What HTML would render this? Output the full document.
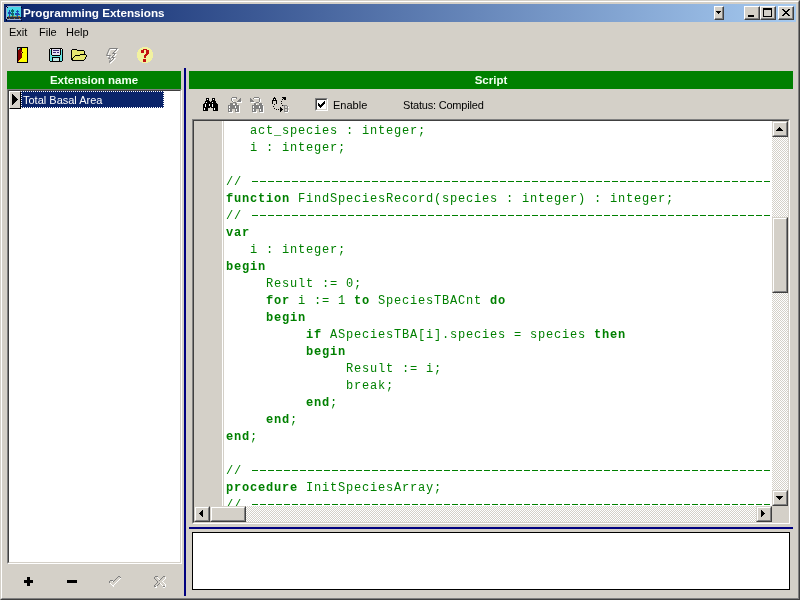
<!DOCTYPE html>
<html><head><meta charset="utf-8">
<style>
*{box-sizing:border-box;margin:0;padding:0}
html,body{width:800px;height:600px;overflow:hidden;-webkit-font-smoothing:none;background:#D4D0C8;font-family:"Liberation Sans",sans-serif;font-size:11px;color:#000}
.a{position:absolute}
#root{position:absolute;left:0;top:0;width:800px;height:600px;will-change:transform}
svg.a{display:block}
#win{position:absolute;left:0;top:0;width:800px;height:600px;border-top:1px solid #D4D0C8;border-left:1px solid #D4D0C8;border-right:1px solid #404040;border-bottom:1px solid #404040}
#win2{position:absolute;left:1px;top:1px;width:798px;height:598px;border-top:1px solid #fff;border-left:1px solid #fff;border-right:1px solid #808080;border-bottom:1px solid #808080}
#title{left:4px;top:4px;width:792px;height:18px;background:linear-gradient(to right,#0A246A,#A6CAF0)}
#ttext{left:23px;top:6px;color:#fff;font-weight:bold;font-size:11.7px;line-height:14px;white-space:nowrap}
.tb{position:absolute;top:6px;height:14px;background:#D4D0C8;border-top:1px solid #fff;border-left:1px solid #fff;border-right:1px solid #404040;border-bottom:1px solid #404040;box-shadow:inset -1px -1px 0 #808080}
.menu{top:26px;line-height:13px;white-space:nowrap}
.ghead{background:#008000;color:#F0FFF0;font-weight:bold;font-size:11.5px;text-align:center;line-height:18px;height:18px}
.sunk{border-top:1px solid #808080;border-left:1px solid #808080;border-right:1px solid #fff;border-bottom:1px solid #fff}
.sunk2{width:100%;height:100%;border-top:1px solid #404040;border-left:1px solid #404040;border-right:1px solid #D4D0C8;border-bottom:1px solid #D4D0C8}
.btn{position:absolute;background:#D4D0C8;border-top:1px solid #D4D0C8;border-left:1px solid #D4D0C8;border-right:1px solid #404040;border-bottom:1px solid #404040}
.btn>div{width:100%;height:100%;border-top:1px solid #fff;border-left:1px solid #fff;border-right:1px solid #808080;border-bottom:1px solid #808080}
.code{will-change:transform;font-family:"Liberation Mono",monospace;font-size:12px;letter-spacing:0.8px;line-height:17px;color:#008000;white-space:pre}
.code b{font-weight:bold}
.dsh{display:inline-block;vertical-align:top;height:17px;background-image:linear-gradient(to right,transparent 2px,#008000 2px);background-size:8px 1px;background-repeat:repeat-x;background-position:0 7px}
.track{background-color:#fff;background-image:linear-gradient(45deg,#D4D0C8 25%,transparent 25%,transparent 75%,#D4D0C8 75%),linear-gradient(45deg,#D4D0C8 25%,transparent 25%,transparent 75%,#D4D0C8 75%);background-size:2px 2px;background-position:0 0,1px 1px}
</style></head><body><div id="root">
<div id="win"></div><div id="win2"></div>
<div class="a" id="title"></div>
<div class="a" id="ttext">Programming Extensions</div>
<svg class="a" style="left:6px;top:6px" width="16" height="15" viewBox="0 0 16 15" shape-rendering="crispEdges"><rect x="0" y="0" width="1" height="1" fill="#000020"/><rect x="1" y="0" width="14" height="1" fill="#9AB0D8"/><rect x="0" y="1" width="1" height="1" fill="#9AB0D8"/><rect x="1" y="1" width="1" height="1" fill="#000020"/><rect x="2" y="1" width="13" height="1" fill="#48D8E8"/><rect x="15" y="1" width="1" height="1" fill="#000020"/><rect x="0" y="2" width="1" height="1" fill="#9AB0D8"/><rect x="1" y="2" width="14" height="1" fill="#48D8E8"/><rect x="0" y="3" width="1" height="1" fill="#9AB0D8"/><rect x="1" y="3" width="5" height="1" fill="#48D8E8"/><rect x="6" y="3" width="1" height="1" fill="#0F6868"/><rect x="7" y="3" width="8" height="1" fill="#48D8E8"/><rect x="0" y="4" width="1" height="1" fill="#9AB0D8"/><rect x="1" y="4" width="2" height="1" fill="#48D8E8"/><rect x="3" y="4" width="1" height="1" fill="#1C48B0"/><rect x="4" y="4" width="1" height="1" fill="#48D8E8"/><rect x="5" y="4" width="3" height="1" fill="#0F6868"/><rect x="8" y="4" width="3" height="1" fill="#48D8E8"/><rect x="11" y="4" width="1" height="1" fill="#1C48B0"/><rect x="12" y="4" width="3" height="1" fill="#48D8E8"/><rect x="0" y="5" width="1" height="1" fill="#9AB0D8"/><rect x="1" y="5" width="2" height="1" fill="#48D8E8"/><rect x="3" y="5" width="1" height="1" fill="#1C48B0"/><rect x="4" y="5" width="1" height="1" fill="#48D8E8"/><rect x="5" y="5" width="3" height="1" fill="#0F6868"/><rect x="8" y="5" width="2" height="1" fill="#48D8E8"/><rect x="10" y="5" width="3" height="1" fill="#1C48B0"/><rect x="13" y="5" width="2" height="1" fill="#48D8E8"/><rect x="0" y="6" width="1" height="1" fill="#9AB0D8"/><rect x="1" y="6" width="1" height="1" fill="#48D8E8"/><rect x="2" y="6" width="3" height="1" fill="#1C48B0"/><rect x="5" y="6" width="1" height="1" fill="#48D8E8"/><rect x="6" y="6" width="1" height="1" fill="#0F6868"/><rect x="7" y="6" width="4" height="1" fill="#48D8E8"/><rect x="11" y="6" width="1" height="1" fill="#1C48B0"/><rect x="12" y="6" width="3" height="1" fill="#48D8E8"/><rect x="0" y="7" width="1" height="1" fill="#9AB0D8"/><rect x="1" y="7" width="1" height="1" fill="#48D8E8"/><rect x="2" y="7" width="3" height="1" fill="#1C48B0"/><rect x="5" y="7" width="3" height="1" fill="#0F6868"/><rect x="8" y="7" width="1" height="1" fill="#48D8E8"/><rect x="9" y="7" width="4" height="1" fill="#1C48B0"/><rect x="13" y="7" width="2" height="1" fill="#48D8E8"/><rect x="0" y="8" width="1" height="1" fill="#9AB0D8"/><rect x="1" y="8" width="2" height="1" fill="#48D8E8"/><rect x="3" y="8" width="1" height="1" fill="#1C48B0"/><rect x="4" y="8" width="1" height="1" fill="#48D8E8"/><rect x="5" y="8" width="3" height="1" fill="#0F6868"/><rect x="8" y="8" width="1" height="1" fill="#48D8E8"/><rect x="9" y="8" width="5" height="1" fill="#1C48B0"/><rect x="14" y="8" width="1" height="1" fill="#48D8E8"/><rect x="0" y="9" width="1" height="1" fill="#9AB0D8"/><rect x="1" y="9" width="2" height="1" fill="#48D8E8"/><rect x="3" y="9" width="1" height="1" fill="#1C48B0"/><rect x="4" y="9" width="2" height="1" fill="#48D8E8"/><rect x="6" y="9" width="1" height="1" fill="#0F6868"/><rect x="7" y="9" width="1" height="1" fill="#50A080"/><rect x="8" y="9" width="2" height="1" fill="#48D8E8"/><rect x="10" y="9" width="1" height="1" fill="#50A080"/><rect x="11" y="9" width="1" height="1" fill="#1C48B0"/><rect x="12" y="9" width="3" height="1" fill="#48D8E8"/><rect x="0" y="10" width="1" height="1" fill="#9AB0D8"/><rect x="1" y="10" width="1" height="1" fill="#48D8E8"/><rect x="2" y="10" width="1" height="1" fill="#B07030"/><rect x="3" y="10" width="1" height="1" fill="#1C48B0"/><rect x="4" y="10" width="1" height="1" fill="#50A080"/><rect x="5" y="10" width="1" height="1" fill="#B07030"/><rect x="6" y="10" width="1" height="1" fill="#0F6868"/><rect x="7" y="10" width="1" height="1" fill="#B07030"/><rect x="8" y="10" width="1" height="1" fill="#50A080"/><rect x="9" y="10" width="1" height="1" fill="#B07030"/><rect x="10" y="10" width="1" height="1" fill="#50A080"/><rect x="11" y="10" width="1" height="1" fill="#1C48B0"/><rect x="12" y="10" width="2" height="1" fill="#B07030"/><rect x="14" y="10" width="1" height="1" fill="#48D8E8"/><rect x="0" y="11" width="1" height="1" fill="#9AB0D8"/><rect x="1" y="11" width="1" height="1" fill="#000020"/><rect x="2" y="11" width="13" height="1" fill="#283040"/><rect x="15" y="11" width="1" height="1" fill="#000020"/><rect x="0" y="12" width="1" height="1" fill="#9AB0D8"/><rect x="1" y="12" width="2" height="1" fill="#283040"/><rect x="3" y="12" width="1" height="1" fill="#B07030"/><rect x="4" y="12" width="4" height="1" fill="#283040"/><rect x="8" y="12" width="1" height="1" fill="#B07030"/><rect x="9" y="12" width="4" height="1" fill="#283040"/><rect x="13" y="12" width="1" height="1" fill="#B07030"/><rect x="14" y="12" width="1" height="1" fill="#283040"/><rect x="0" y="13" width="1" height="1" fill="#000020"/><rect x="1" y="13" width="14" height="1" fill="#9AB0D8"/><rect x="0" y="14" width="1" height="1" fill="#000020"/><rect x="15" y="14" width="1" height="1" fill="#000020"/></svg>
<div class="tb" style="left:714px;width:10px"></div>
<div class="tb" style="left:744px;width:16px"></div>
<div class="tb" style="left:760px;width:16px"></div>
<div class="tb" style="left:778px;width:16px"></div>
<svg class="a" style="left:716px;top:11px" width="5" height="3" viewBox="0 0 5 3" shape-rendering="crispEdges"><rect x="0" y="0" width="5" height="1" fill="#000000"/><rect x="1" y="1" width="3" height="1" fill="#000000"/><rect x="2" y="2" width="1" height="1" fill="#000000"/></svg><svg class="a" style="left:748px;top:15px" width="6" height="2" viewBox="0 0 6 2" shape-rendering="crispEdges"><rect x="0" y="0" width="6" height="1" fill="#000000"/><rect x="0" y="1" width="6" height="1" fill="#000000"/></svg><svg class="a" style="left:763px;top:8px" width="9" height="9" viewBox="0 0 9 9" shape-rendering="crispEdges"><rect x="0" y="0" width="9" height="1" fill="#000000"/><rect x="0" y="1" width="9" height="1" fill="#000000"/><rect x="0" y="2" width="1" height="1" fill="#000000"/><rect x="8" y="2" width="1" height="1" fill="#000000"/><rect x="0" y="3" width="1" height="1" fill="#000000"/><rect x="8" y="3" width="1" height="1" fill="#000000"/><rect x="0" y="4" width="1" height="1" fill="#000000"/><rect x="8" y="4" width="1" height="1" fill="#000000"/><rect x="0" y="5" width="1" height="1" fill="#000000"/><rect x="8" y="5" width="1" height="1" fill="#000000"/><rect x="0" y="6" width="1" height="1" fill="#000000"/><rect x="8" y="6" width="1" height="1" fill="#000000"/><rect x="0" y="7" width="1" height="1" fill="#000000"/><rect x="8" y="7" width="1" height="1" fill="#000000"/><rect x="0" y="8" width="9" height="1" fill="#000000"/></svg><svg class="a" style="left:782px;top:9px" width="8" height="7" viewBox="0 0 8 7" shape-rendering="crispEdges"><rect x="0" y="0" width="2" height="1" fill="#000000"/><rect x="6" y="0" width="2" height="1" fill="#000000"/><rect x="1" y="1" width="2" height="1" fill="#000000"/><rect x="5" y="1" width="2" height="1" fill="#000000"/><rect x="2" y="2" width="4" height="1" fill="#000000"/><rect x="3" y="3" width="2" height="1" fill="#000000"/><rect x="2" y="4" width="4" height="1" fill="#000000"/><rect x="1" y="5" width="2" height="1" fill="#000000"/><rect x="5" y="5" width="2" height="1" fill="#000000"/><rect x="0" y="6" width="2" height="1" fill="#000000"/><rect x="6" y="6" width="2" height="1" fill="#000000"/></svg>

<div class="a menu" style="left:9px">Exit</div>
<div class="a menu" style="left:39px">File</div>
<div class="a menu" style="left:66px">Help</div>
<svg class="a" style="left:17px;top:47px" width="11" height="16" viewBox="0 0 11 16" shape-rendering="crispEdges"><rect x="0" y="0" width="11" height="1" fill="#000000"/><rect x="0" y="1" width="1" height="1" fill="#000000"/><rect x="1" y="1" width="2" height="1" fill="#80C0C0"/><rect x="3" y="1" width="1" height="1" fill="#800000"/><rect x="4" y="1" width="1" height="1" fill="#000000"/><rect x="5" y="1" width="5" height="1" fill="#FFFF00"/><rect x="10" y="1" width="1" height="1" fill="#000000"/><rect x="0" y="2" width="1" height="1" fill="#000000"/><rect x="1" y="2" width="1" height="1" fill="#80C0C0"/><rect x="2" y="2" width="2" height="1" fill="#800000"/><rect x="4" y="2" width="1" height="1" fill="#000000"/><rect x="5" y="2" width="5" height="1" fill="#FFFF00"/><rect x="10" y="2" width="1" height="1" fill="#000000"/><rect x="0" y="3" width="1" height="1" fill="#000000"/><rect x="1" y="3" width="4" height="1" fill="#800000"/><rect x="5" y="3" width="5" height="1" fill="#FFFF00"/><rect x="10" y="3" width="1" height="1" fill="#000000"/><rect x="0" y="4" width="1" height="1" fill="#000000"/><rect x="1" y="4" width="4" height="1" fill="#800000"/><rect x="5" y="4" width="5" height="1" fill="#FFFF00"/><rect x="10" y="4" width="1" height="1" fill="#000000"/><rect x="0" y="5" width="1" height="1" fill="#000000"/><rect x="1" y="5" width="3" height="1" fill="#800000"/><rect x="4" y="5" width="1" height="1" fill="#FF9040"/><rect x="5" y="5" width="1" height="1" fill="#000000"/><rect x="6" y="5" width="4" height="1" fill="#FFFF00"/><rect x="10" y="5" width="1" height="1" fill="#000000"/><rect x="0" y="6" width="1" height="1" fill="#000000"/><rect x="1" y="6" width="4" height="1" fill="#800000"/><rect x="5" y="6" width="5" height="1" fill="#FFFF00"/><rect x="10" y="6" width="1" height="1" fill="#000000"/><rect x="0" y="7" width="1" height="1" fill="#000000"/><rect x="1" y="7" width="4" height="1" fill="#800000"/><rect x="5" y="7" width="5" height="1" fill="#FFFF00"/><rect x="10" y="7" width="1" height="1" fill="#000000"/><rect x="0" y="8" width="1" height="1" fill="#000000"/><rect x="1" y="8" width="4" height="1" fill="#800000"/><rect x="5" y="8" width="5" height="1" fill="#FFFF00"/><rect x="10" y="8" width="1" height="1" fill="#000000"/><rect x="0" y="9" width="1" height="1" fill="#000000"/><rect x="1" y="9" width="4" height="1" fill="#800000"/><rect x="5" y="9" width="5" height="1" fill="#FFFF00"/><rect x="10" y="9" width="1" height="1" fill="#000000"/><rect x="0" y="10" width="1" height="1" fill="#000000"/><rect x="1" y="10" width="4" height="1" fill="#800000"/><rect x="5" y="10" width="5" height="1" fill="#FFFF00"/><rect x="10" y="10" width="1" height="1" fill="#000000"/><rect x="0" y="11" width="1" height="1" fill="#000000"/><rect x="1" y="11" width="3" height="1" fill="#800000"/><rect x="4" y="11" width="6" height="1" fill="#FFFF00"/><rect x="10" y="11" width="1" height="1" fill="#000000"/><rect x="0" y="12" width="1" height="1" fill="#000000"/><rect x="1" y="12" width="2" height="1" fill="#800000"/><rect x="3" y="12" width="7" height="1" fill="#FFFF00"/><rect x="10" y="12" width="1" height="1" fill="#000000"/><rect x="0" y="13" width="1" height="1" fill="#000000"/><rect x="1" y="13" width="1" height="1" fill="#800000"/><rect x="2" y="13" width="8" height="1" fill="#FFFF00"/><rect x="10" y="13" width="1" height="1" fill="#000000"/><rect x="0" y="14" width="1" height="1" fill="#000000"/><rect x="1" y="14" width="1" height="1" fill="#FF9040"/><rect x="2" y="14" width="8" height="1" fill="#FFFF00"/><rect x="10" y="14" width="1" height="1" fill="#000000"/><rect x="0" y="15" width="11" height="1" fill="#000000"/></svg><svg class="a" style="left:49px;top:48px" width="14" height="14" viewBox="0 0 14 14" shape-rendering="crispEdges"><rect x="1" y="0" width="12" height="1" fill="#000000"/><rect x="0" y="1" width="1" height="1" fill="#000000"/><rect x="1" y="1" width="1" height="1" fill="#FFFFFF"/><rect x="2" y="1" width="1" height="1" fill="#000000"/><rect x="3" y="1" width="8" height="1" fill="#E4E0F4"/><rect x="11" y="1" width="1" height="1" fill="#000000"/><rect x="12" y="1" width="1" height="1" fill="#FFFFFF"/><rect x="13" y="1" width="1" height="1" fill="#000000"/><rect x="0" y="2" width="1" height="1" fill="#000000"/><rect x="1" y="2" width="1" height="1" fill="#68E4E4"/><rect x="2" y="2" width="1" height="1" fill="#000000"/><rect x="3" y="2" width="1" height="1" fill="#E4E0F4"/><rect x="4" y="2" width="6" height="1" fill="#382878"/><rect x="10" y="2" width="1" height="1" fill="#E4E0F4"/><rect x="11" y="2" width="1" height="1" fill="#000000"/><rect x="12" y="2" width="1" height="1" fill="#68E4E4"/><rect x="13" y="2" width="1" height="1" fill="#000000"/><rect x="0" y="3" width="1" height="1" fill="#000000"/><rect x="1" y="3" width="1" height="1" fill="#68E4E4"/><rect x="2" y="3" width="1" height="1" fill="#000000"/><rect x="3" y="3" width="8" height="1" fill="#E4E0F4"/><rect x="11" y="3" width="1" height="1" fill="#000000"/><rect x="12" y="3" width="1" height="1" fill="#68E4E4"/><rect x="13" y="3" width="1" height="1" fill="#000000"/><rect x="0" y="4" width="1" height="1" fill="#000000"/><rect x="1" y="4" width="1" height="1" fill="#68E4E4"/><rect x="2" y="4" width="1" height="1" fill="#000000"/><rect x="3" y="4" width="1" height="1" fill="#E4E0F4"/><rect x="4" y="4" width="3" height="1" fill="#382878"/><rect x="7" y="4" width="1" height="1" fill="#E4E0F4"/><rect x="8" y="4" width="2" height="1" fill="#382878"/><rect x="10" y="4" width="1" height="1" fill="#E4E0F4"/><rect x="11" y="4" width="1" height="1" fill="#000000"/><rect x="12" y="4" width="1" height="1" fill="#68E4E4"/><rect x="13" y="4" width="1" height="1" fill="#000000"/><rect x="0" y="5" width="1" height="1" fill="#000000"/><rect x="1" y="5" width="1" height="1" fill="#68E4E4"/><rect x="2" y="5" width="1" height="1" fill="#000000"/><rect x="3" y="5" width="8" height="1" fill="#E4E0F4"/><rect x="11" y="5" width="1" height="1" fill="#000000"/><rect x="12" y="5" width="1" height="1" fill="#68E4E4"/><rect x="13" y="5" width="1" height="1" fill="#000000"/><rect x="0" y="6" width="1" height="1" fill="#000000"/><rect x="1" y="6" width="1" height="1" fill="#68E4E4"/><rect x="2" y="6" width="1" height="1" fill="#000000"/><rect x="3" y="6" width="8" height="1" fill="#E4E0F4"/><rect x="11" y="6" width="1" height="1" fill="#000000"/><rect x="12" y="6" width="1" height="1" fill="#68E4E4"/><rect x="13" y="6" width="1" height="1" fill="#000000"/><rect x="0" y="7" width="1" height="1" fill="#000000"/><rect x="1" y="7" width="2" height="1" fill="#68E4E4"/><rect x="3" y="7" width="8" height="1" fill="#000000"/><rect x="11" y="7" width="2" height="1" fill="#68E4E4"/><rect x="13" y="7" width="1" height="1" fill="#000000"/><rect x="0" y="8" width="1" height="1" fill="#000000"/><rect x="1" y="8" width="12" height="1" fill="#68E4E4"/><rect x="13" y="8" width="1" height="1" fill="#000000"/><rect x="0" y="9" width="1" height="1" fill="#000000"/><rect x="1" y="9" width="2" height="1" fill="#68E4E4"/><rect x="3" y="9" width="8" height="1" fill="#000000"/><rect x="11" y="9" width="2" height="1" fill="#68E4E4"/><rect x="13" y="9" width="1" height="1" fill="#000000"/><rect x="0" y="10" width="1" height="1" fill="#000000"/><rect x="1" y="10" width="2" height="1" fill="#68E4E4"/><rect x="3" y="10" width="1" height="1" fill="#000000"/><rect x="4" y="10" width="6" height="1" fill="#C4E4E4"/><rect x="10" y="10" width="1" height="1" fill="#000000"/><rect x="11" y="10" width="2" height="1" fill="#68E4E4"/><rect x="13" y="10" width="1" height="1" fill="#000000"/><rect x="0" y="11" width="1" height="1" fill="#000000"/><rect x="1" y="11" width="2" height="1" fill="#68E4E4"/><rect x="3" y="11" width="1" height="1" fill="#000000"/><rect x="4" y="11" width="6" height="1" fill="#C4E4E4"/><rect x="10" y="11" width="1" height="1" fill="#000000"/><rect x="11" y="11" width="2" height="1" fill="#68E4E4"/><rect x="13" y="11" width="1" height="1" fill="#000000"/><rect x="0" y="12" width="1" height="1" fill="#000000"/><rect x="1" y="12" width="2" height="1" fill="#68E4E4"/><rect x="3" y="12" width="1" height="1" fill="#000000"/><rect x="4" y="12" width="6" height="1" fill="#C4E4E4"/><rect x="10" y="12" width="1" height="1" fill="#000000"/><rect x="11" y="12" width="2" height="1" fill="#68E4E4"/><rect x="13" y="12" width="1" height="1" fill="#000000"/><rect x="1" y="13" width="12" height="1" fill="#000000"/></svg><svg class="a" style="left:71px;top:49px" width="16" height="12" viewBox="0 0 16 12" shape-rendering="crispEdges"><rect x="1" y="0" width="5" height="1" fill="#000000"/><rect x="0" y="1" width="1" height="1" fill="#000000"/><rect x="1" y="1" width="5" height="1" fill="#E6E670"/><rect x="6" y="1" width="7" height="1" fill="#000000"/><rect x="0" y="2" width="1" height="1" fill="#000000"/><rect x="1" y="2" width="12" height="1" fill="#E6E670"/><rect x="13" y="2" width="1" height="1" fill="#000000"/><rect x="0" y="3" width="1" height="1" fill="#000000"/><rect x="1" y="3" width="12" height="1" fill="#E6E670"/><rect x="13" y="3" width="1" height="1" fill="#000000"/><rect x="0" y="4" width="1" height="1" fill="#000000"/><rect x="1" y="4" width="12" height="1" fill="#E6E670"/><rect x="13" y="4" width="1" height="1" fill="#000000"/><rect x="0" y="5" width="1" height="1" fill="#000000"/><rect x="1" y="5" width="8" height="1" fill="#E6E670"/><rect x="9" y="5" width="6" height="1" fill="#000000"/><rect x="0" y="6" width="1" height="1" fill="#000000"/><rect x="1" y="6" width="3" height="1" fill="#E6E670"/><rect x="4" y="6" width="5" height="1" fill="#000000"/><rect x="9" y="6" width="6" height="1" fill="#E6E670"/><rect x="15" y="6" width="1" height="1" fill="#000000"/><rect x="0" y="7" width="1" height="1" fill="#000000"/><rect x="1" y="7" width="2" height="1" fill="#E6E670"/><rect x="3" y="7" width="1" height="1" fill="#000000"/><rect x="4" y="7" width="11" height="1" fill="#E6E670"/><rect x="15" y="7" width="1" height="1" fill="#000000"/><rect x="0" y="8" width="1" height="1" fill="#000000"/><rect x="1" y="8" width="1" height="1" fill="#E6E670"/><rect x="2" y="8" width="1" height="1" fill="#000000"/><rect x="3" y="8" width="11" height="1" fill="#E6E670"/><rect x="14" y="8" width="1" height="1" fill="#000000"/><rect x="0" y="9" width="2" height="1" fill="#000000"/><rect x="2" y="9" width="12" height="1" fill="#E6E670"/><rect x="14" y="9" width="1" height="1" fill="#000000"/><rect x="0" y="10" width="2" height="1" fill="#000000"/><rect x="2" y="10" width="11" height="1" fill="#E6E670"/><rect x="13" y="10" width="1" height="1" fill="#000000"/><rect x="1" y="11" width="12" height="1" fill="#000000"/></svg><svg class="a" style="left:104px;top:46px" width="20" height="20" viewBox="104 46 20 20"><path d="M110.5,49.5 L118.5,49.5 L113.5,54.5 L116.5,54.5 L112.5,58.5 L115.5,58.5 L110.5,63.5 L111.5,59.5 L109.5,59.5 L111.5,56.5 L107.5,56.5 Z" fill="none" stroke="#fff" stroke-width="1"/><path d="M109.5,48.5 L117.5,48.5 L112.5,53.5 L115.5,53.5 L111.5,57.5 L114.5,57.5 L109.5,62.5 L110.5,58.5 L108.5,58.5 L110.5,55.5 L106.5,55.5 Z" fill="none" stroke="#808080" stroke-width="1"/></svg><svg class="a" style="left:137px;top:47px" width="16" height="16" viewBox="0 0 16 16" shape-rendering="crispEdges"><rect x="5" y="0" width="6" height="1" fill="#F2F2A0"/><rect x="3" y="1" width="10" height="1" fill="#F2F2A0"/><rect x="2" y="2" width="4" height="1" fill="#F2F2A0"/><rect x="6" y="2" width="4" height="1" fill="#C41010"/><rect x="10" y="2" width="4" height="1" fill="#F2F2A0"/><rect x="1" y="3" width="3" height="1" fill="#F2F2A0"/><rect x="4" y="3" width="3" height="1" fill="#C41010"/><rect x="7" y="3" width="2" height="1" fill="#F2F2A0"/><rect x="9" y="3" width="3" height="1" fill="#C41010"/><rect x="12" y="3" width="3" height="1" fill="#F2F2A0"/><rect x="1" y="4" width="3" height="1" fill="#F2F2A0"/><rect x="4" y="4" width="3" height="1" fill="#C41010"/><rect x="7" y="4" width="2" height="1" fill="#F2F2A0"/><rect x="9" y="4" width="3" height="1" fill="#C41010"/><rect x="12" y="4" width="3" height="1" fill="#F2F2A0"/><rect x="0" y="5" width="4" height="1" fill="#F2F2A0"/><rect x="4" y="5" width="3" height="1" fill="#C41010"/><rect x="7" y="5" width="2" height="1" fill="#F2F2A0"/><rect x="9" y="5" width="3" height="1" fill="#C41010"/><rect x="12" y="5" width="4" height="1" fill="#F2F2A0"/><rect x="0" y="6" width="9" height="1" fill="#F2F2A0"/><rect x="9" y="6" width="3" height="1" fill="#C41010"/><rect x="12" y="6" width="4" height="1" fill="#F2F2A0"/><rect x="0" y="7" width="8" height="1" fill="#F2F2A0"/><rect x="8" y="7" width="3" height="1" fill="#C41010"/><rect x="11" y="7" width="5" height="1" fill="#F2F2A0"/><rect x="0" y="8" width="7" height="1" fill="#F2F2A0"/><rect x="7" y="8" width="3" height="1" fill="#C41010"/><rect x="10" y="8" width="6" height="1" fill="#F2F2A0"/><rect x="0" y="9" width="7" height="1" fill="#F2F2A0"/><rect x="7" y="9" width="2" height="1" fill="#C41010"/><rect x="9" y="9" width="7" height="1" fill="#F2F2A0"/><rect x="0" y="10" width="7" height="1" fill="#F2F2A0"/><rect x="7" y="10" width="2" height="1" fill="#C41010"/><rect x="9" y="10" width="7" height="1" fill="#F2F2A0"/><rect x="1" y="11" width="14" height="1" fill="#F2F2A0"/><rect x="1" y="12" width="5" height="1" fill="#F2F2A0"/><rect x="6" y="12" width="3" height="1" fill="#C41010"/><rect x="9" y="12" width="6" height="1" fill="#F2F2A0"/><rect x="2" y="13" width="4" height="1" fill="#F2F2A0"/><rect x="6" y="13" width="3" height="1" fill="#C41010"/><rect x="9" y="13" width="5" height="1" fill="#F2F2A0"/><rect x="3" y="14" width="3" height="1" fill="#F2F2A0"/><rect x="6" y="14" width="3" height="1" fill="#C41010"/><rect x="9" y="14" width="4" height="1" fill="#F2F2A0"/><rect x="5" y="15" width="6" height="1" fill="#F2F2A0"/></svg>

<div class="a ghead" style="left:7px;top:71px;width:174px">Extension name</div>
<div class="a sunk" style="left:7px;top:89px;width:175px;height:475px"><div class="sunk2" style="background:#fff"></div></div>
<div class="btn" style="left:9px;top:91px;width:12px;height:18px;border-color:#fff #000 #000 #fff;border-width:1px"></div>
<svg class="a" style="left:12px;top:94px" width="6" height="11" viewBox="0 0 6 11" shape-rendering="crispEdges"><rect x="0" y="0" width="1" height="1" fill="#000000"/><rect x="0" y="1" width="2" height="1" fill="#000000"/><rect x="0" y="2" width="3" height="1" fill="#000000"/><rect x="0" y="3" width="4" height="1" fill="#000000"/><rect x="0" y="4" width="5" height="1" fill="#000000"/><rect x="0" y="5" width="6" height="1" fill="#000000"/><rect x="0" y="6" width="5" height="1" fill="#000000"/><rect x="0" y="7" width="4" height="1" fill="#000000"/><rect x="0" y="8" width="3" height="1" fill="#000000"/><rect x="0" y="9" width="2" height="1" fill="#000000"/><rect x="0" y="10" width="1" height="1" fill="#000000"/></svg>
<div class="a" style="left:21px;top:91px;width:143px;height:17px;background:#0A246A;outline:1px dotted #fff;outline-offset:-1px"></div>
<div class="a" style="left:23px;top:94px;color:#fff;line-height:13px;font-size:11px">Total Basal Area</div>
<svg class="a" style="left:24px;top:577px" width="9" height="9" viewBox="0 0 9 9" shape-rendering="crispEdges"><rect x="3" y="0" width="3" height="1" fill="#000000"/><rect x="3" y="1" width="3" height="1" fill="#000000"/><rect x="3" y="2" width="3" height="1" fill="#000000"/><rect x="0" y="3" width="9" height="1" fill="#000000"/><rect x="0" y="4" width="9" height="1" fill="#000000"/><rect x="0" y="5" width="9" height="1" fill="#000000"/><rect x="3" y="6" width="3" height="1" fill="#000000"/><rect x="3" y="7" width="3" height="1" fill="#000000"/><rect x="3" y="8" width="3" height="1" fill="#000000"/></svg><svg class="a" style="left:67px;top:580px" width="10" height="3" viewBox="0 0 10 3" shape-rendering="crispEdges"><rect x="0" y="0" width="10" height="1" fill="#000000"/><rect x="0" y="1" width="10" height="1" fill="#000000"/><rect x="0" y="2" width="10" height="1" fill="#000000"/></svg><svg class="a" style="left:107px;top:575px" width="14" height="12" viewBox="0 0 14 12" shape-rendering="crispEdges"><rect x="11" y="1" width="2" height="1" fill="#808080"/><rect x="10" y="2" width="1" height="1" fill="#808080"/><rect x="13" y="2" width="1" height="1" fill="#808080"/><rect x="9" y="3" width="1" height="1" fill="#808080"/><rect x="13" y="3" width="1" height="1" fill="#FFFFFF"/><rect x="8" y="4" width="1" height="1" fill="#808080"/><rect x="12" y="4" width="1" height="1" fill="#FFFFFF"/><rect x="3" y="5" width="3" height="1" fill="#808080"/><rect x="7" y="5" width="1" height="1" fill="#808080"/><rect x="11" y="5" width="1" height="1" fill="#FFFFFF"/><rect x="2" y="6" width="1" height="1" fill="#808080"/><rect x="5" y="6" width="1" height="1" fill="#FFFFFF"/><rect x="6" y="6" width="1" height="1" fill="#808080"/><rect x="10" y="6" width="1" height="1" fill="#FFFFFF"/><rect x="2" y="7" width="1" height="1" fill="#808080"/><rect x="9" y="7" width="1" height="1" fill="#FFFFFF"/><rect x="3" y="8" width="1" height="1" fill="#FFFFFF"/><rect x="8" y="8" width="1" height="1" fill="#FFFFFF"/><rect x="4" y="9" width="1" height="1" fill="#FFFFFF"/><rect x="7" y="9" width="1" height="1" fill="#FFFFFF"/><rect x="5" y="10" width="2" height="1" fill="#FFFFFF"/><rect x="6" y="11" width="1" height="1" fill="#FFFFFF"/></svg><svg class="a" style="left:153px;top:575px" width="13" height="13" viewBox="0 0 13 13" shape-rendering="crispEdges"><rect x="2" y="1" width="3" height="1" fill="#808080"/><rect x="10" y="1" width="2" height="1" fill="#808080"/><rect x="1" y="2" width="1" height="1" fill="#808080"/><rect x="4" y="2" width="1" height="1" fill="#FFFFFF"/><rect x="9" y="2" width="1" height="1" fill="#808080"/><rect x="12" y="2" width="1" height="1" fill="#FFFFFF"/><rect x="1" y="3" width="1" height="1" fill="#808080"/><rect x="5" y="3" width="1" height="1" fill="#FFFFFF"/><rect x="8" y="3" width="1" height="1" fill="#808080"/><rect x="12" y="3" width="1" height="1" fill="#FFFFFF"/><rect x="2" y="4" width="1" height="1" fill="#808080"/><rect x="6" y="4" width="1" height="1" fill="#FFFFFF"/><rect x="7" y="4" width="1" height="1" fill="#808080"/><rect x="11" y="4" width="1" height="1" fill="#FFFFFF"/><rect x="3" y="5" width="1" height="1" fill="#808080"/><rect x="6" y="5" width="1" height="1" fill="#808080"/><rect x="10" y="5" width="1" height="1" fill="#FFFFFF"/><rect x="4" y="6" width="1" height="1" fill="#808080"/><rect x="9" y="6" width="1" height="1" fill="#FFFFFF"/><rect x="4" y="7" width="1" height="1" fill="#808080"/><rect x="10" y="7" width="1" height="1" fill="#FFFFFF"/><rect x="3" y="8" width="1" height="1" fill="#808080"/><rect x="6" y="8" width="1" height="1" fill="#808080"/><rect x="7" y="8" width="1" height="1" fill="#FFFFFF"/><rect x="11" y="8" width="1" height="1" fill="#FFFFFF"/><rect x="2" y="9" width="1" height="1" fill="#808080"/><rect x="5" y="9" width="1" height="1" fill="#808080"/><rect x="8" y="9" width="1" height="1" fill="#FFFFFF"/><rect x="12" y="9" width="1" height="1" fill="#FFFFFF"/><rect x="1" y="10" width="1" height="1" fill="#808080"/><rect x="4" y="10" width="1" height="1" fill="#808080"/><rect x="9" y="10" width="1" height="1" fill="#FFFFFF"/><rect x="12" y="10" width="1" height="1" fill="#FFFFFF"/><rect x="1" y="11" width="2" height="1" fill="#808080"/><rect x="3" y="11" width="1" height="1" fill="#FFFFFF"/><rect x="10" y="11" width="2" height="1" fill="#808080"/><rect x="12" y="11" width="1" height="1" fill="#FFFFFF"/><rect x="2" y="12" width="2" height="1" fill="#FFFFFF"/><rect x="10" y="12" width="2" height="1" fill="#FFFFFF"/></svg>

<div class="a" style="left:184px;top:68px;width:2px;height:528px;background:#000080"></div>
<div class="a" style="left:189px;top:527px;width:604px;height:2px;background:#000080"></div>

<div class="a ghead" style="left:189px;top:71px;width:604px">Script</div>
<svg class="a" style="left:203px;top:98px" width="15" height="13" viewBox="0 0 15 13" shape-rendering="crispEdges"><rect x="3" y="0" width="3" height="1" fill="#000000"/><rect x="9" y="0" width="3" height="1" fill="#000000"/><rect x="3" y="1" width="1" height="1" fill="#000000"/><rect x="4" y="1" width="1" height="1" fill="#FFFFFF"/><rect x="5" y="1" width="1" height="1" fill="#000000"/><rect x="9" y="1" width="1" height="1" fill="#000000"/><rect x="10" y="1" width="1" height="1" fill="#FFFFFF"/><rect x="11" y="1" width="1" height="1" fill="#000000"/><rect x="3" y="2" width="3" height="1" fill="#000000"/><rect x="9" y="2" width="3" height="1" fill="#000000"/><rect x="2" y="3" width="5" height="1" fill="#000000"/><rect x="8" y="3" width="5" height="1" fill="#000000"/><rect x="2" y="4" width="1" height="1" fill="#000000"/><rect x="3" y="4" width="1" height="1" fill="#FFFFFF"/><rect x="4" y="4" width="5" height="1" fill="#000000"/><rect x="9" y="4" width="1" height="1" fill="#FFFFFF"/><rect x="10" y="4" width="3" height="1" fill="#000000"/><rect x="1" y="5" width="13" height="1" fill="#000000"/><rect x="0" y="6" width="2" height="1" fill="#000000"/><rect x="2" y="6" width="1" height="1" fill="#FFFFFF"/><rect x="3" y="6" width="3" height="1" fill="#000000"/><rect x="6" y="6" width="1" height="1" fill="#FFFFFF"/><rect x="7" y="6" width="2" height="1" fill="#000000"/><rect x="9" y="6" width="1" height="1" fill="#FFFFFF"/><rect x="10" y="6" width="5" height="1" fill="#000000"/><rect x="0" y="7" width="2" height="1" fill="#000000"/><rect x="2" y="7" width="1" height="1" fill="#FFFFFF"/><rect x="3" y="7" width="3" height="1" fill="#000000"/><rect x="6" y="7" width="1" height="1" fill="#FFFFFF"/><rect x="7" y="7" width="2" height="1" fill="#000000"/><rect x="9" y="7" width="1" height="1" fill="#FFFFFF"/><rect x="10" y="7" width="5" height="1" fill="#000000"/><rect x="0" y="8" width="2" height="1" fill="#000000"/><rect x="2" y="8" width="1" height="1" fill="#FFFFFF"/><rect x="3" y="8" width="6" height="1" fill="#000000"/><rect x="9" y="8" width="1" height="1" fill="#FFFFFF"/><rect x="10" y="8" width="5" height="1" fill="#000000"/><rect x="0" y="9" width="7" height="1" fill="#000000"/><rect x="8" y="9" width="7" height="1" fill="#000000"/><rect x="0" y="10" width="1" height="1" fill="#000000"/><rect x="1" y="10" width="1" height="1" fill="#FFFFFF"/><rect x="2" y="10" width="3" height="1" fill="#000000"/><rect x="10" y="10" width="1" height="1" fill="#000000"/><rect x="11" y="10" width="1" height="1" fill="#FFFFFF"/><rect x="12" y="10" width="3" height="1" fill="#000000"/><rect x="0" y="11" width="1" height="1" fill="#000000"/><rect x="1" y="11" width="1" height="1" fill="#FFFFFF"/><rect x="2" y="11" width="3" height="1" fill="#000000"/><rect x="10" y="11" width="1" height="1" fill="#000000"/><rect x="11" y="11" width="1" height="1" fill="#FFFFFF"/><rect x="12" y="11" width="3" height="1" fill="#000000"/><rect x="0" y="12" width="5" height="1" fill="#000000"/><rect x="10" y="12" width="5" height="1" fill="#000000"/></svg><svg class="a" style="left:227px;top:96px" width="16" height="17" viewBox="0 0 16 17" shape-rendering="crispEdges"><rect x="5" y="1" width="5" height="1" fill="#808080"/><rect x="4" y="2" width="1" height="1" fill="#808080"/><rect x="5" y="2" width="4" height="1" fill="#FFFFFF"/><rect x="9" y="2" width="1" height="1" fill="#808080"/><rect x="13" y="2" width="1" height="1" fill="#808080"/><rect x="4" y="3" width="1" height="1" fill="#808080"/><rect x="5" y="3" width="1" height="1" fill="#FFFFFF"/><rect x="12" y="3" width="2" height="1" fill="#808080"/><rect x="4" y="4" width="1" height="1" fill="#808080"/><rect x="5" y="4" width="1" height="1" fill="#FFFFFF"/><rect x="11" y="4" width="3" height="1" fill="#808080"/><rect x="5" y="5" width="1" height="1" fill="#808080"/><rect x="6" y="5" width="1" height="1" fill="#FFFFFF"/><rect x="10" y="5" width="4" height="1" fill="#808080"/><rect x="14" y="5" width="1" height="1" fill="#FFFFFF"/><rect x="6" y="6" width="3" height="1" fill="#808080"/><rect x="10" y="6" width="5" height="1" fill="#FFFFFF"/><rect x="3" y="7" width="3" height="1" fill="#808080"/><rect x="8" y="7" width="2" height="1" fill="#808080"/><rect x="3" y="8" width="3" height="1" fill="#808080"/><rect x="6" y="8" width="2" height="1" fill="#FFFFFF"/><rect x="8" y="8" width="2" height="1" fill="#808080"/><rect x="10" y="8" width="1" height="1" fill="#FFFFFF"/><rect x="1" y="9" width="11" height="1" fill="#808080"/><rect x="1" y="10" width="1" height="1" fill="#808080"/><rect x="2" y="10" width="1" height="1" fill="#FFFFFF"/><rect x="3" y="10" width="5" height="1" fill="#808080"/><rect x="8" y="10" width="1" height="1" fill="#FFFFFF"/><rect x="9" y="10" width="3" height="1" fill="#808080"/><rect x="12" y="10" width="1" height="1" fill="#FFFFFF"/><rect x="1" y="11" width="1" height="1" fill="#808080"/><rect x="2" y="11" width="1" height="1" fill="#FFFFFF"/><rect x="3" y="11" width="5" height="1" fill="#808080"/><rect x="8" y="11" width="1" height="1" fill="#FFFFFF"/><rect x="9" y="11" width="3" height="1" fill="#808080"/><rect x="12" y="11" width="1" height="1" fill="#FFFFFF"/><rect x="1" y="12" width="11" height="1" fill="#808080"/><rect x="12" y="12" width="1" height="1" fill="#FFFFFF"/><rect x="1" y="13" width="1" height="1" fill="#808080"/><rect x="2" y="13" width="1" height="1" fill="#FFFFFF"/><rect x="3" y="13" width="2" height="1" fill="#808080"/><rect x="8" y="13" width="1" height="1" fill="#808080"/><rect x="9" y="13" width="1" height="1" fill="#FFFFFF"/><rect x="10" y="13" width="2" height="1" fill="#808080"/><rect x="12" y="13" width="1" height="1" fill="#FFFFFF"/><rect x="1" y="14" width="1" height="1" fill="#808080"/><rect x="2" y="14" width="1" height="1" fill="#FFFFFF"/><rect x="3" y="14" width="2" height="1" fill="#808080"/><rect x="8" y="14" width="1" height="1" fill="#808080"/><rect x="9" y="14" width="1" height="1" fill="#FFFFFF"/><rect x="10" y="14" width="2" height="1" fill="#808080"/><rect x="12" y="14" width="1" height="1" fill="#FFFFFF"/><rect x="1" y="15" width="4" height="1" fill="#808080"/><rect x="5" y="15" width="1" height="1" fill="#FFFFFF"/><rect x="8" y="15" width="4" height="1" fill="#808080"/><rect x="12" y="15" width="1" height="1" fill="#FFFFFF"/><rect x="2" y="16" width="4" height="1" fill="#FFFFFF"/><rect x="9" y="16" width="4" height="1" fill="#FFFFFF"/></svg><svg class="a" style="left:248px;top:96px" width="16" height="17" viewBox="0 0 16 17" shape-rendering="crispEdges"><rect x="6" y="1" width="5" height="1" fill="#808080"/><rect x="2" y="2" width="1" height="1" fill="#808080"/><rect x="5" y="2" width="1" height="1" fill="#808080"/><rect x="6" y="2" width="5" height="1" fill="#FFFFFF"/><rect x="11" y="2" width="1" height="1" fill="#808080"/><rect x="2" y="3" width="2" height="1" fill="#808080"/><rect x="11" y="3" width="1" height="1" fill="#808080"/><rect x="12" y="3" width="1" height="1" fill="#FFFFFF"/><rect x="2" y="4" width="3" height="1" fill="#808080"/><rect x="11" y="4" width="1" height="1" fill="#808080"/><rect x="12" y="4" width="1" height="1" fill="#FFFFFF"/><rect x="2" y="5" width="4" height="1" fill="#808080"/><rect x="11" y="5" width="1" height="1" fill="#808080"/><rect x="12" y="5" width="1" height="1" fill="#FFFFFF"/><rect x="3" y="6" width="4" height="1" fill="#FFFFFF"/><rect x="8" y="6" width="3" height="1" fill="#808080"/><rect x="11" y="6" width="1" height="1" fill="#FFFFFF"/><rect x="6" y="7" width="2" height="1" fill="#808080"/><rect x="11" y="7" width="3" height="1" fill="#808080"/><rect x="6" y="8" width="2" height="1" fill="#808080"/><rect x="8" y="8" width="1" height="1" fill="#FFFFFF"/><rect x="11" y="8" width="3" height="1" fill="#808080"/><rect x="14" y="8" width="1" height="1" fill="#FFFFFF"/><rect x="4" y="9" width="11" height="1" fill="#808080"/><rect x="4" y="10" width="1" height="1" fill="#808080"/><rect x="5" y="10" width="1" height="1" fill="#FFFFFF"/><rect x="6" y="10" width="5" height="1" fill="#808080"/><rect x="11" y="10" width="1" height="1" fill="#FFFFFF"/><rect x="12" y="10" width="3" height="1" fill="#808080"/><rect x="15" y="10" width="1" height="1" fill="#FFFFFF"/><rect x="4" y="11" width="1" height="1" fill="#808080"/><rect x="5" y="11" width="1" height="1" fill="#FFFFFF"/><rect x="6" y="11" width="5" height="1" fill="#808080"/><rect x="11" y="11" width="1" height="1" fill="#FFFFFF"/><rect x="12" y="11" width="3" height="1" fill="#808080"/><rect x="15" y="11" width="1" height="1" fill="#FFFFFF"/><rect x="4" y="12" width="11" height="1" fill="#808080"/><rect x="15" y="12" width="1" height="1" fill="#FFFFFF"/><rect x="4" y="13" width="1" height="1" fill="#808080"/><rect x="5" y="13" width="1" height="1" fill="#FFFFFF"/><rect x="6" y="13" width="2" height="1" fill="#808080"/><rect x="11" y="13" width="1" height="1" fill="#808080"/><rect x="12" y="13" width="1" height="1" fill="#FFFFFF"/><rect x="13" y="13" width="2" height="1" fill="#808080"/><rect x="15" y="13" width="1" height="1" fill="#FFFFFF"/><rect x="4" y="14" width="1" height="1" fill="#808080"/><rect x="5" y="14" width="1" height="1" fill="#FFFFFF"/><rect x="6" y="14" width="2" height="1" fill="#808080"/><rect x="11" y="14" width="1" height="1" fill="#808080"/><rect x="12" y="14" width="1" height="1" fill="#FFFFFF"/><rect x="13" y="14" width="2" height="1" fill="#808080"/><rect x="15" y="14" width="1" height="1" fill="#FFFFFF"/><rect x="4" y="15" width="4" height="1" fill="#808080"/><rect x="8" y="15" width="1" height="1" fill="#FFFFFF"/><rect x="11" y="15" width="4" height="1" fill="#808080"/><rect x="15" y="15" width="1" height="1" fill="#FFFFFF"/><rect x="5" y="16" width="4" height="1" fill="#FFFFFF"/><rect x="12" y="16" width="4" height="1" fill="#FFFFFF"/></svg><svg class="a" style="left:272px;top:97px" width="17" height="16" viewBox="0 0 17 16" shape-rendering="crispEdges"><rect x="2" y="0" width="1" height="1" fill="#000000"/><rect x="10" y="0" width="4" height="1" fill="#000000"/><rect x="1" y="1" width="3" height="1" fill="#000000"/><rect x="11" y="1" width="3" height="1" fill="#000000"/><rect x="1" y="2" width="1" height="1" fill="#000000"/><rect x="2" y="2" width="1" height="1" fill="#FFFFFF"/><rect x="3" y="2" width="1" height="1" fill="#000000"/><rect x="10" y="2" width="1" height="1" fill="#000000"/><rect x="12" y="2" width="2" height="1" fill="#000000"/><rect x="0" y="3" width="5" height="1" fill="#000000"/><rect x="0" y="4" width="1" height="1" fill="#000000"/><rect x="4" y="4" width="1" height="1" fill="#000000"/><rect x="9" y="4" width="1" height="1" fill="#000000"/><rect x="0" y="5" width="1" height="1" fill="#000000"/><rect x="4" y="5" width="1" height="1" fill="#000000"/><rect x="0" y="6" width="1" height="1" fill="#000000"/><rect x="4" y="6" width="1" height="1" fill="#000000"/><rect x="9" y="6" width="1" height="1" fill="#000000"/><rect x="2" y="7" width="1" height="1" fill="#000000"/><rect x="10" y="8" width="1" height="1" fill="#000000"/><rect x="11" y="8" width="4" height="1" fill="#808080"/><rect x="1" y="9" width="1" height="1" fill="#000000"/><rect x="12" y="9" width="1" height="1" fill="#808080"/><rect x="15" y="9" width="1" height="1" fill="#808080"/><rect x="8" y="10" width="1" height="1" fill="#000000"/><rect x="12" y="10" width="1" height="1" fill="#808080"/><rect x="15" y="10" width="1" height="1" fill="#808080"/><rect x="16" y="10" width="1" height="1" fill="#FFFFFF"/><rect x="2" y="11" width="1" height="1" fill="#000000"/><rect x="8" y="11" width="2" height="1" fill="#000000"/><rect x="12" y="11" width="4" height="1" fill="#808080"/><rect x="4" y="12" width="1" height="1" fill="#000000"/><rect x="6" y="12" width="1" height="1" fill="#000000"/><rect x="8" y="12" width="3" height="1" fill="#000000"/><rect x="12" y="12" width="1" height="1" fill="#808080"/><rect x="15" y="12" width="1" height="1" fill="#808080"/><rect x="8" y="13" width="2" height="1" fill="#000000"/><rect x="12" y="13" width="1" height="1" fill="#808080"/><rect x="15" y="13" width="1" height="1" fill="#808080"/><rect x="16" y="13" width="1" height="1" fill="#FFFFFF"/><rect x="8" y="14" width="1" height="1" fill="#000000"/><rect x="12" y="14" width="4" height="1" fill="#808080"/><rect x="16" y="14" width="1" height="1" fill="#FFFFFF"/><rect x="13" y="15" width="3" height="1" fill="#FFFFFF"/></svg>
<div class="a" style="left:315px;top:98px;width:13px;height:13px;border-top:1px solid #808080;border-left:1px solid #808080;border-right:1px solid #fff;border-bottom:1px solid #fff"><div style="width:11px;height:11px;background:#fff;border-top:1px solid #404040;border-left:1px solid #404040;border-right:1px solid #D4D0C8;border-bottom:1px solid #D4D0C8"></div></div><svg class="a" style="left:318px;top:101px" width="7" height="7" viewBox="0 0 7 7" shape-rendering="crispEdges"><rect x="6" y="0" width="1" height="1" fill="#000000"/><rect x="5" y="1" width="2" height="1" fill="#000000"/><rect x="0" y="2" width="1" height="1" fill="#000000"/><rect x="4" y="2" width="3" height="1" fill="#000000"/><rect x="0" y="3" width="2" height="1" fill="#000000"/><rect x="3" y="3" width="3" height="1" fill="#000000"/><rect x="0" y="4" width="5" height="1" fill="#000000"/><rect x="1" y="5" width="3" height="1" fill="#000000"/><rect x="2" y="6" width="1" height="1" fill="#000000"/></svg>
<div class="a" style="left:333px;top:99px;line-height:13px">Enable</div>
<div class="a" style="left:403px;top:99px;line-height:13px;letter-spacing:-0.2px">Status: Compiled</div>

<div class="a sunk" style="left:192px;top:119px;width:598px;height:405px"><div class="sunk2" style="background:#fff"></div></div>
<div class="a" style="left:194px;top:121px;width:28px;height:385px;background:#D4D0C8"></div>
<div class="a" style="left:222px;top:121px;width:1px;height:385px;background:#fff"></div>
<div class="a" style="left:223px;top:121px;width:1px;height:385px;background:#D4D0C8"></div>
<div class="a" style="left:224px;top:121px;width:548px;height:385px;overflow:hidden">
<div class="code" style="position:absolute;left:2px;top:2px">   act_species : integer;
   i : integer;

// <span class="dsh">                                                                             </span>
<b>function</b> FindSpeciesRecord(species : integer) : integer;
// <span class="dsh">                                                                             </span>
<b>var</b>
   i : integer;
<b>begin</b>
     Result := 0;
     <b>for</b> i := 1 <b>to</b> SpeciesTBACnt <b>do</b>
     <b>begin</b>
          <b>if</b> ASpeciesTBA[i].species = species <b>then</b>
          <b>begin</b>
               Result := i;
               break;
          <b>end</b>;
     <b>end</b>;
<b>end</b>;

// <span class="dsh">                                                                             </span>
<b>procedure</b> InitSpeciesArray;
// <span class="dsh">                                                                             </span></div>
</div>
<div class="a track" style="left:772px;top:137px;width:16px;height:353px"></div>
<div class="btn" style="left:772px;top:121px;width:16px;height:16px"><div></div></div>
<div class="btn" style="left:772px;top:217px;width:16px;height:76px"><div></div></div>
<div class="btn" style="left:772px;top:490px;width:16px;height:16px"><div></div></div>
<div class="a track" style="left:210px;top:506px;width:546px;height:16px"></div>
<div class="btn" style="left:194px;top:506px;width:16px;height:16px"><div></div></div>
<div class="btn" style="left:210px;top:506px;width:36px;height:16px"><div></div></div>
<div class="btn" style="left:756px;top:506px;width:16px;height:16px"><div></div></div>
<div class="a" style="left:772px;top:506px;width:16px;height:16px;background:#D4D0C8"></div>
<svg class="a" style="left:776px;top:127px" width="7" height="4" viewBox="0 0 7 4" shape-rendering="crispEdges"><rect x="3" y="0" width="1" height="1" fill="#000000"/><rect x="2" y="1" width="3" height="1" fill="#000000"/><rect x="1" y="2" width="5" height="1" fill="#000000"/><rect x="0" y="3" width="7" height="1" fill="#000000"/></svg><svg class="a" style="left:776px;top:496px" width="7" height="4" viewBox="0 0 7 4" shape-rendering="crispEdges"><rect x="0" y="0" width="7" height="1" fill="#000000"/><rect x="1" y="1" width="5" height="1" fill="#000000"/><rect x="2" y="2" width="3" height="1" fill="#000000"/><rect x="3" y="3" width="1" height="1" fill="#000000"/></svg><svg class="a" style="left:199px;top:510px" width="4" height="7" viewBox="0 0 4 7" shape-rendering="crispEdges"><rect x="3" y="0" width="1" height="1" fill="#000000"/><rect x="2" y="1" width="2" height="1" fill="#000000"/><rect x="1" y="2" width="3" height="1" fill="#000000"/><rect x="0" y="3" width="4" height="1" fill="#000000"/><rect x="1" y="4" width="3" height="1" fill="#000000"/><rect x="2" y="5" width="2" height="1" fill="#000000"/><rect x="3" y="6" width="1" height="1" fill="#000000"/></svg><svg class="a" style="left:761px;top:510px" width="4" height="7" viewBox="0 0 4 7" shape-rendering="crispEdges"><rect x="0" y="0" width="1" height="1" fill="#000000"/><rect x="0" y="1" width="2" height="1" fill="#000000"/><rect x="0" y="2" width="3" height="1" fill="#000000"/><rect x="0" y="3" width="4" height="1" fill="#000000"/><rect x="0" y="4" width="3" height="1" fill="#000000"/><rect x="0" y="5" width="2" height="1" fill="#000000"/><rect x="0" y="6" width="1" height="1" fill="#000000"/></svg>

<div class="a" style="left:192px;top:532px;width:598px;height:58px;background:#fff;border:1px solid #000"></div>
</div></body></html>
